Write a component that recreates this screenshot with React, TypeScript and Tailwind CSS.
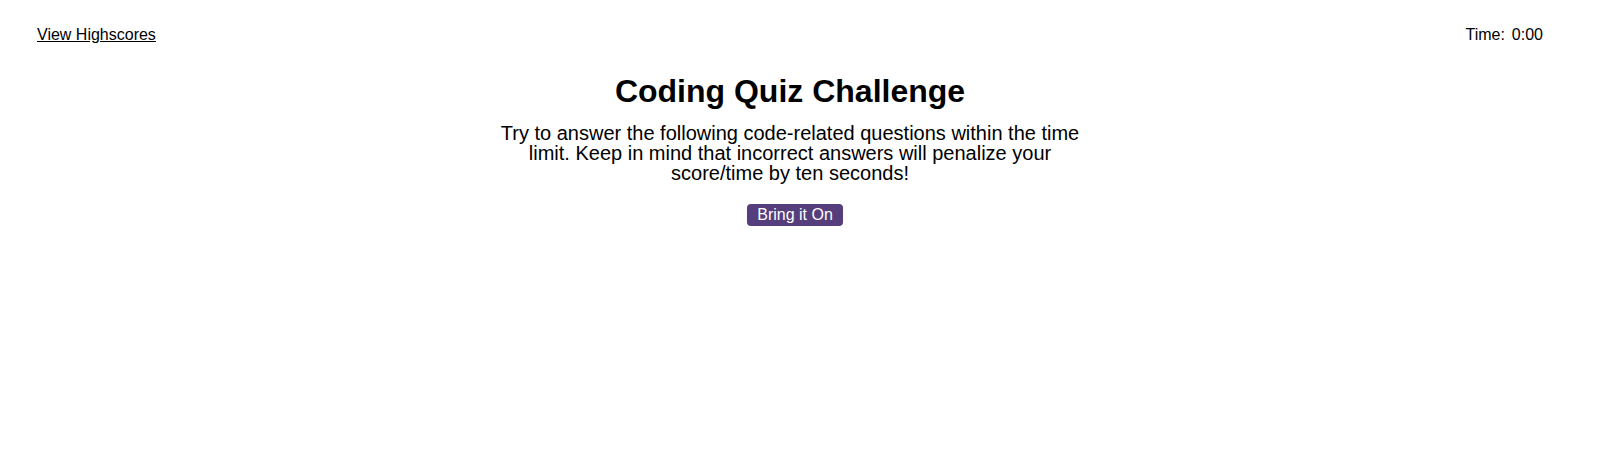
import { useState } from 'react';

const App = () => {
  const [time] = useState('0:00');

  return (
    <div className="min-h-screen bg-white text-black font-['Liberation_Sans',Arial,sans-serif]">
      <div className="pl-[37px] pr-[69px]">
        {/* Header */}
        <header className="flex items-start justify-between pt-[26px] text-base leading-[18px]">
          <a href="#" className="underline text-black">
            View Highscores
          </a>
          <div className="flex">
            <span>Time:</span>
            <span className="ml-[7px]">{time}</span>
          </div>
        </header>

        {/* Intro */}
        <main className="flex flex-col items-center text-center">
          <h1 className="mt-[29px] text-[32px] font-bold leading-[37px]">Coding Quiz Challenge</h1>
          <p className="mt-[13px] w-[600px] text-[20px] leading-[20px]">
            Try to answer the following code-related questions within the time limit. Keep in mind that
            incorrect answers will penalize your score/time by ten seconds!
          </p>
          <button className="mt-[21px] ml-[10px] rounded-[4px] bg-[#563d7c] px-[10px] py-[2px] text-base leading-[18px] text-white">
            Bring it On
          </button>
        </main>
      </div>
    </div>
  );
};

export default App;
